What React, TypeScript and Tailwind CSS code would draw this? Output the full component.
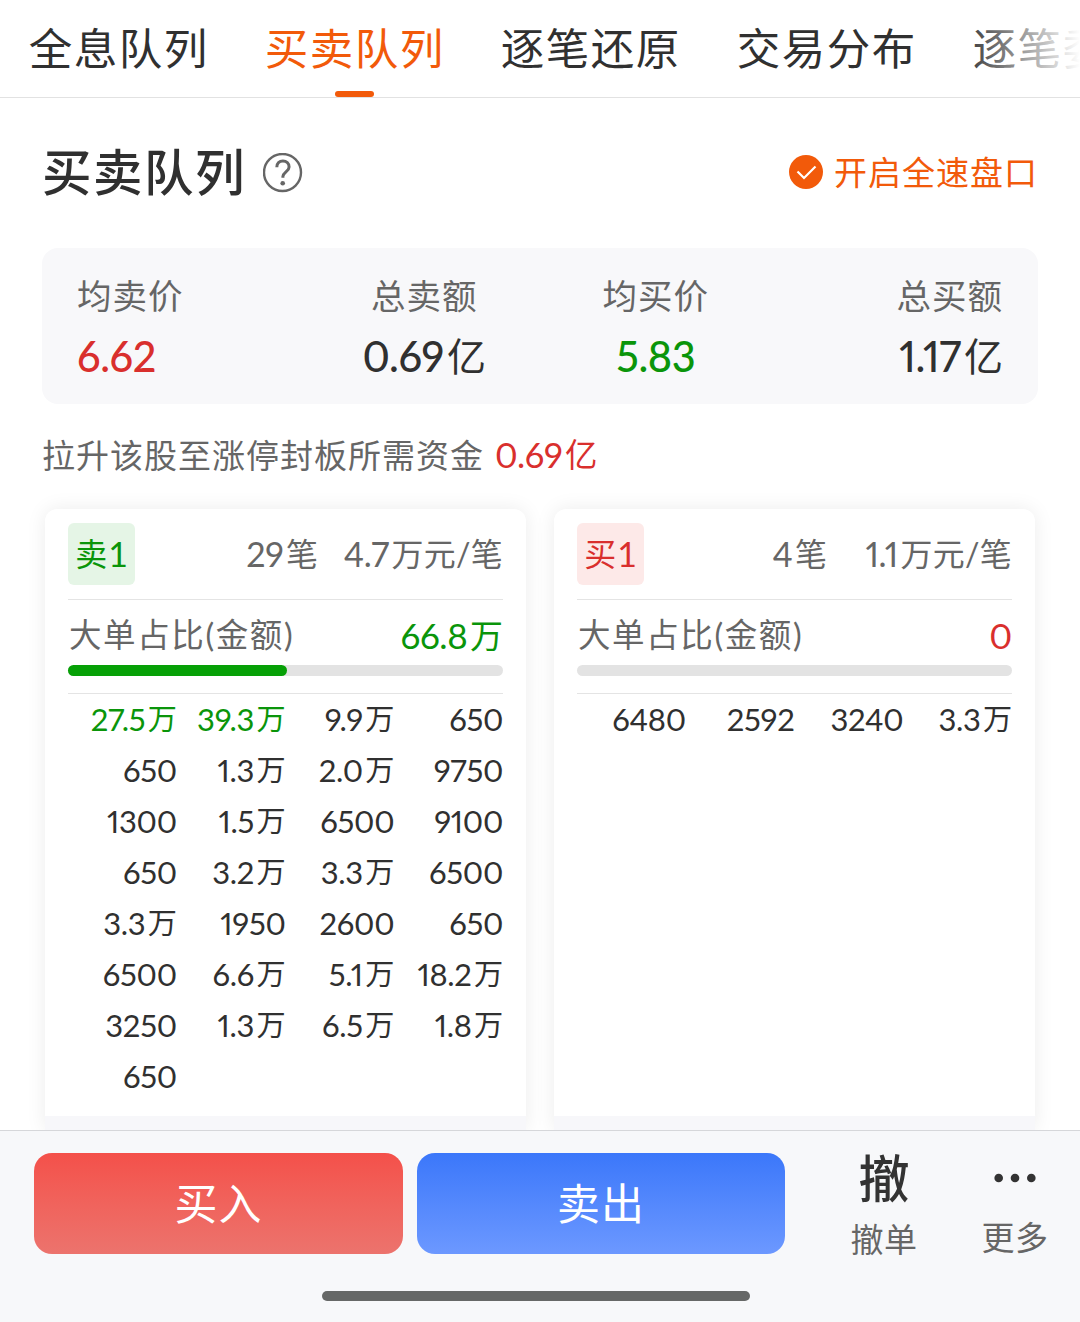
import React from 'react';
import clsx from 'clsx';

type Tone = 'red' | 'green' | 'dark';

interface QueueEntry {
  value: string;
  large?: boolean;
}

interface QueueCardProps {
  side: 'sell' | 'buy';
  label: string;
  count: string;
  average: string;
  largeAmount: string;
  /** Share of large orders, 0-100 */
  largePercent: number;
  entries: QueueEntry[];
}

const TABS = ['全息队列', '买卖队列', '逐笔还原', '交易分布', '逐笔委托'];

const SUMMARY: { label: string; value: string; tone: Tone; align: string }[] = [
  { label: '均卖价', value: '6.62', tone: 'red', align: 'items-start' },
  { label: '总卖额', value: '0.69亿', tone: 'dark', align: 'items-center' },
  { label: '均买价', value: '5.83', tone: 'green', align: 'items-center' },
  { label: '总买额', value: '1.17亿', tone: 'dark', align: 'items-end' },
];

const TONE_CLASS: Record<Tone, string> = {
  red: 'text-[#d92f2d]',
  green: 'text-[#0a950a]',
  dark: 'text-[#303030]',
};

const SELL_ENTRIES: QueueEntry[] = [
  { value: '27.5万', large: true },
  { value: '39.3万', large: true },
  ...[
    '9.9万', '650',
    '650', '1.3万', '2.0万', '9750',
    '1300', '1.5万', '6500', '9100',
    '650', '3.2万', '3.3万', '6500',
    '3.3万', '1950', '2600', '650',
    '6500', '6.6万', '5.1万', '18.2万',
    '3250', '1.3万', '6.5万', '1.8万',
    '650',
  ].map(value => ({ value })),
];

const BUY_ENTRIES: QueueEntry[] = ['6480', '2592', '3240', '3.3万'].map(value => ({ value }));

/**
 * Number with a slightly smaller unit behind it
 */
const Amount: React.FC<{ text: string }> = ({ text }) => {
  const [, num, unit] = text.match(/^([\d.]+)(.*)$/) ?? ['', text, ''];
  return (
    <>
      <span className="tracking-[-0.01em] proportional-nums">{num}</span>
      {unit && (
        <span
          className={clsx(
            'ml-[0.08em] align-[0.03em] text-[0.94em] leading-none font-normal',
            unit.length > 1 && 'tracking-[0.01em]',
          )}
        >
          {unit}
        </span>
      )}
    </>
  );
};

const HelpIcon = () => (
  <svg width="40" height="40" viewBox="0 0 40 40" fill="none" stroke="#666">
    <circle cx="19.500" cy="19.500" r="18.500" strokeWidth="2.400" />
    <path
      d="M13.800 14.200c0-3.800 2.600-6.300 6.100-6.300s6.200 2.500 6.200 6c0 4.600-6.200 5.200-6.200 9.700v1.200"
      strokeWidth="3"
    />
    <circle cx="19.700" cy="30.200" r="2.300" fill="#666" stroke="none" />
  </svg>
);

const CheckIcon = () => (
  <svg width="34" height="34" viewBox="0 0 34 34" fill="none">
    <circle cx="17" cy="17" r="17" fill="#f25a0a" />
    <path d="M8.500 16.500l6.500 6.500L26.500 11.500" stroke="#fff" strokeWidth="2.200" />
  </svg>
);

const DotsIcon = () => (
  <svg width="44" height="50" viewBox="0 0 44 50" fill="#333">
    <circle cx="5" cy="26" r="4.500" />
    <circle cx="22" cy="26" r="4.500" />
    <circle cx="39" cy="26" r="4.500" />
  </svg>
);

const TabBar = () => (
  <nav className="relative flex h-[98px] gap-[56px] overflow-hidden border-b border-[#e2e2e2] pl-[28px] text-[43.500px] tracking-[1.500px] text-[#303030]">
    {TABS.map(tab => {
      const active = tab === '买卖队列';
      return (
        <div
          key={tab}
          className={clsx('flex w-[180px] shrink-0 flex-col items-center', active && 'text-[#f25a0a]')}
        >
          <span className="h-[91px] pl-[1.500px] leading-[97px] whitespace-nowrap">{tab}</span>
          {active && <span className="h-[6px] w-[39px] shrink-0 rounded-full bg-[#f25a0a]" />}
        </div>
      );
    })}
    {/* Fade over the tab that runs off the edge */}
    <div className="absolute top-0 right-0 h-[96px] w-[120px] bg-linear-to-r from-white/0 to-white" />
  </nav>
);

const QueueCard: React.FC<QueueCardProps> = ({
  side,
  label,
  count,
  average,
  largeAmount,
  largePercent,
  entries,
}) => {
  const sell = side === 'sell';
  const tone = sell ? TONE_CLASS.green : TONE_CLASS.red;

  return (
    <section className="flex w-[481px] flex-col overflow-hidden rounded-t-[12px] bg-white shadow-[0_0_20px_rgba(0,0,0,0.08)]">
      <div className="h-[607px] shrink-0 px-[23px] pt-[14px]">
        {/* Header */}
        <div className="flex h-[62px] items-center text-[34px] text-[#666]">
          <span
            className={clsx(
              'flex h-full w-[67px] items-center justify-center rounded-[6px]',
              sell ? 'bg-[#e5f5e6]' : 'bg-[#fde9e8]',
              tone,
            )}
          >
            <span className="text-[32px]">{label}</span>
            <span className="ml-[1px]">1</span>
          </span>
          <span className="flex-1 text-right"><Amount text={count} /></span>
          <span className="w-[185px] text-right"><Amount text={average} /></span>
        </div>

        {/* Large order share */}
        <div className="mt-[14px] h-[95px] border-y border-[#e4e4e4]">
          <div className="flex h-[65px] items-center justify-between pt-[5px] text-[34px] text-[#666]">
            <span className="pl-[1px] text-[32.500px] tracking-[1.600px]">大单占比(金额)</span>
            <span className={clsx('text-[35px]', tone)}><Amount text={largeAmount} /></span>
          </div>
          <div className="h-[11px] rounded-full bg-[#e3e3e3]">
            <div
              className="h-full rounded-full bg-[#06a006]"
              style={{ width: `${largePercent}%` }}
            />
          </div>
        </div>

        {/* Orders */}
        <div className="grid auto-rows-[51px] grid-cols-4 text-right text-[31px] leading-[51px] whitespace-nowrap text-[#303030]">
          {entries.map((entry, i) => (
            <span key={i} className={clsx('-ml-4', entry.large && TONE_CLASS.green)}>
              <Amount text={entry.value} />
            </span>
          ))}
        </div>
      </div>
      <div className="flex-1 bg-[#f7f7fa]" />
    </section>
  );
};

export default function App() {
  return (
    <div className="flex h-[1322px] w-[1080px] flex-col overflow-hidden bg-white font-['Lato','Noto_Sans_CJK_SC',sans-serif] leading-none">
      <TabBar />

      <main className="flex min-h-0 flex-1 flex-col overflow-hidden px-[42px]">
        {/* Title row */}
        <div className="flex h-[150px] shrink-0 items-center justify-between">
          <div className="flex items-center gap-[17px]">
            <h1 className="-mt-[1px] text-[49.500px] font-medium tracking-[1.500px] text-[#303030]">买卖队列</h1>
            <HelpIcon />
          </div>
          <div className="-mt-[2px] flex items-center gap-[11px] text-[33px] tracking-[1px] text-[#f25a0a]">
            <CheckIcon />
            <span>开启全速盘口</span>
          </div>
        </div>

        {/* Summary */}
        <div className="grid h-[156px] shrink-0 grid-cols-4 rounded-[16px] bg-[#f8f8fa] px-[35px] pt-[18px]">
          {SUMMARY.map(item => (
            <div key={item.label} className={clsx('flex flex-col', item.align)}>
              <span className="text-[34.500px] leading-[60px] tracking-[1px] text-[#666]">{item.label}</span>
              <span className={clsx('h-[60px] text-[41.500px] leading-[60px] font-medium', TONE_CLASS[item.tone])}>
                <Amount text={item.value} />
              </span>
            </div>
          ))}
        </div>

        <p className="flex h-[103px] shrink-0 items-center gap-[11px] text-[33px] text-[#666]">
          <span className="tracking-[1px]">拉升该股至涨停封板所需资金</span>
          <span className={clsx('text-[34.500px]', TONE_CLASS.red)}><Amount text="0.69亿" /></span>
        </p>

        <div className="-mx-[42px] mt-[2px] flex min-h-0 flex-1 justify-center gap-[28px]">
          <QueueCard
            side="sell"
            label="卖"
            count="29笔"
            average="4.7万元/笔"
            largeAmount="66.8万"
            largePercent={50.4}
            entries={SELL_ENTRIES}
          />
          <QueueCard
            side="buy"
            label="买"
            count="4笔"
            average="1.1万元/笔"
            largeAmount="0"
            largePercent={0}
            entries={BUY_ENTRIES}
          />
        </div>
      </main>

      {/* Trade bar */}
      <footer className="relative h-[192px] shrink-0 border-t border-[#d6d7da] bg-[#f7f8fa] pt-[22px]">
        <div className="flex h-[101px] pl-[34px]">
          <button className="h-[101px] w-[369px] rounded-[18px] bg-linear-to-b from-[#f4504a] to-[#ec736d] text-[43px] tracking-[1px] text-white">
            买入
          </button>
          <button className="ml-[14px] h-[101px] w-[368px] rounded-[18px] bg-linear-to-b from-[#3b77fa] to-[#6c98ff] text-[43px] tracking-[1px] text-white">
            卖出
          </button>
          <div className="ml-[49px] flex w-[100px] flex-col items-center text-[33px] text-[#666]">
            <span className="text-[51px] leading-[52px] font-medium text-[#333]">撤</span>
            <span className="mt-[18px] tracking-[0.500px]">撤单</span>
          </div>
          <div className="ml-[31px] flex w-[100px] flex-col items-center text-[33px] text-[#666]">
            <DotsIcon />
            <span className="mt-[20px] tracking-[0.500px]">更多</span>
          </div>
        </div>
        <div className="mt-[37px] ml-[322px] h-[10px] w-[428px] rounded-full bg-[#666867]" />
      </footer>
    </div>
  );
}
